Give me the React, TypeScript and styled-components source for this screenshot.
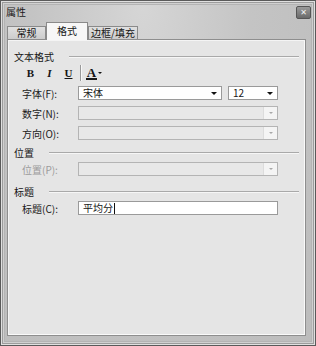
import React from "react";
import styled, { createGlobalStyle, css } from "styled-components";

const Global = createGlobalStyle`
  html, body { margin: 0; padding: 0; background: #bdbdbd; }
  body { font-family: "Noto Sans CJK SC", "Noto Sans", sans-serif; }
  * { box-sizing: border-box; }
`;

const Window = styled.div`
  width: 316px;
  height: 346px;
  border: 1px solid #5a5a5a;
  background: radial-gradient(ellipse at 45% 0%, #d6d6d6 0%, #c4c4c4 45%, #bcbcbc 100%);
  box-shadow: inset 0 0 0 1px #e0e0e0, inset 0 0 0 2px #9c9c9c, inset 0 0 0 3px #d0d0d0,
    inset 0 0 0 4px #b4b4b4;
  display: flex;
  flex-direction: column;
  color: #151515;
  font-size: 10px;
`;

const TitleBar = styled.div`
  height: 21px;
  display: flex;
  align-items: center;
  justify-content: space-between;
  padding: 0 4px 0 5px;
  font-size: 10px;
  color: #1a1a1a;
`;

const CloseButton = styled.div`
  width: 15px;
  height: 13px;
  margin-top: 2px;
  border: 1px solid #555;
  border-radius: 2px;
  background: linear-gradient(#9a9a9a, #6a6a6a);
  display: flex;
  align-items: center;
  justify-content: center;
  color: #f2f2f2;
  font-family: "DejaVu Sans", sans-serif;
  font-size: 8px;
  font-weight: bold;
  line-height: 1;
`;

const Body = styled.div`
  flex: 1;
  display: flex;
  flex-direction: column;
  padding: 0 9px 9px 6px;
`;

const TabStrip = styled.div`
  height: 17px;
  display: flex;
  align-items: flex-end;
  position: relative;
  z-index: 1;
`;

const Tab = styled.div<{ $w: number; $active?: boolean }>`
  width: ${(p) => p.$w}px;
  height: 13px;
  border: 1px solid #8a8a8a;
  border-bottom: none;
  background: linear-gradient(#e0e0e0, #cccccc);
  display: flex;
  align-items: center;
  justify-content: center;
  font-size: 10px;
  line-height: 1;
  ${(p) =>
    p.$active &&
    css`
      height: 18px;
      margin-bottom: -1px;
      background: #f7f7f7;
      align-items: flex-start;
      padding-top: 3px;
    `}
`;

const Panel = styled.div`
  flex: 1;
  border: 1px solid #8e8e8e;
  background: #e5e5e5;
  box-shadow: inset 1px 1px 0 #f4f4f4, inset -1px -1px 0 #fafafa;
  display: flex;
  flex-direction: column;
`;

const SectionHeader = styled.div<{ $mt: number }>`
  height: 14px;
  margin-top: ${(p) => p.$mt}px;
  padding: 0 6px;
  display: flex;
  align-items: center;
  font-size: 10px;
  &::after {
    content: "";
    flex: 1;
    height: 1px;
    margin-left: 15px;
    background: #a9a9a9;
    box-shadow: 0 1px 0 #f6f6f6;
  }
`;

const Toolbar = styled.div`
  height: 18px;
  margin-top: 1px;
  padding-left: 13px;
  display: flex;
  align-items: center;
`;

const ToolButton = styled.div<{ $italic?: boolean; $underline?: boolean }>`
  width: 19px;
  height: 16px;
  display: flex;
  align-items: center;
  justify-content: center;
  font-family: "Liberation Serif", serif;
  font-weight: bold;
  font-size: 11px;
  font-style: ${(p) => (p.$italic ? "italic" : "normal")};
  text-decoration: ${(p) => (p.$underline ? "underline" : "none")};
`;

const ToolSep = styled.div`
  width: 1px;
  height: 16px;
  margin: 0 5px 0 2px;
  background: #9a9a9a;
  box-shadow: 1px 0 0 #f8f8f8;
`;

const ColorButton = styled.div`
  height: 16px;
  display: flex;
  align-items: center;
  gap: 1px;
`;

const ColorLetter = styled.div`
  display: flex;
  flex-direction: column;
  align-items: center;
  font-family: "Liberation Serif", serif;
  font-weight: bold;
  font-size: 13px;
  line-height: 11px;
  &::after {
    content: "";
    width: 11px;
    height: 2px;
    background: #1a1a1a;
  }
`;

const Caret = styled.span<{ $color?: string; $size?: number }>`
  width: 0;
  height: 0;
  border-left: ${(p) => p.$size ?? 3}px solid transparent;
  border-right: ${(p) => p.$size ?? 3}px solid transparent;
  border-top: ${(p) => p.$size ?? 3}px solid ${(p) => p.$color ?? "#111"};
`;

const Row = styled.div<{ $mt: number }>`
  height: 14px;
  margin-top: ${(p) => p.$mt}px;
  padding-left: 14px;
  display: flex;
  align-items: center;
`;

const Label = styled.div<{ $disabled?: boolean }>`
  width: 56px;
  font-size: 10px;
  color: ${(p) => (p.$disabled ? "#9c9c9c" : "#1a1a1a")};
  white-space: nowrap;
`;

const Combo = styled.div<{ $w: number; $disabled?: boolean; $ml?: number }>`
  width: ${(p) => p.$w}px;
  height: 14px;
  margin-left: ${(p) => p.$ml ?? 0}px;
  border: 1px solid ${(p) => (p.$disabled ? "#b4b4b4" : "#9a9a9a")};
  background: ${(p) => (p.$disabled ? "#e8e8e8" : "#ffffff")};
  display: flex;
  align-items: center;
  font-size: 10px;
`;

const ComboText = styled.div`
  flex: 1;
  padding-left: 4px;
  line-height: 1;
  white-space: nowrap;
`;

const ComboArrow = styled.div<{ $disabled?: boolean }>`
  width: 14px;
  height: 100%;
  display: flex;
  align-items: center;
  justify-content: center;
  ${(p) =>
    p.$disabled &&
    css`
      background: #f4f4f4;
      border-left: 1px solid #dcdcdc;
    `}
`;

const TextInput = styled.div`
  width: 200px;
  height: 14px;
  border: 1px solid #9a9a9a;
  background: #fff;
  display: flex;
  align-items: center;
  padding-left: 4px;
  font-size: 10px;
  line-height: 1;
`;

const Cursor = styled.span`
  display: inline-block;
  width: 1px;
  height: 11px;
  margin-left: 1px;
  background: #111;
`;

function ComboBox(props: { w: number; text?: string; disabled?: boolean; ml?: number }) {
  return (
    <Combo $w={props.w} $disabled={props.disabled} $ml={props.ml}>
      <ComboText>{props.text}</ComboText>
      <ComboArrow $disabled={props.disabled}>
        <Caret $color={props.disabled ? "#a8a8a8" : "#111"} $size={props.disabled ? 2.5 : 3} />
      </ComboArrow>
    </Combo>
  );
}

export default function App() {
  return (
    <>
      <Global />
      <Window>
        <TitleBar>
          <span>属性</span>
          <CloseButton>✕</CloseButton>
        </TitleBar>
        <Body>
          <TabStrip>
            <Tab $w={39}>常规</Tab>
            <Tab $w={42} $active>格式</Tab>
            <Tab $w={50}>边框/填充</Tab>
          </TabStrip>
          <Panel>
            <SectionHeader $mt={9}>文本格式</SectionHeader>
            <Toolbar>
              <ToolButton>B</ToolButton>
              <ToolButton $italic>I</ToolButton>
              <ToolButton $underline>U</ToolButton>
              <ToolSep />
              <ColorButton>
                <ColorLetter>A</ColorLetter>
                <Caret $size={2} />
              </ColorButton>
            </Toolbar>
            <Row $mt={4}>
              <Label>字体(F):</Label>
              <ComboBox w={144} text="宋体" />
              <ComboBox w={50} text="12" ml={6} />
            </Row>
            <Row $mt={6}>
              <Label>数字(N):</Label>
              <ComboBox w={200} disabled />
            </Row>
            <Row $mt={6}>
              <Label>方向(O):</Label>
              <ComboBox w={200} disabled />
            </Row>
            <SectionHeader $mt={5}>位置</SectionHeader>
            <Row $mt={3}>
              <Label $disabled>位置(P):</Label>
              <ComboBox w={200} disabled />
            </Row>
            <SectionHeader $mt={8}>标题</SectionHeader>
            <Row $mt={3}>
              <Label>标题(C):</Label>
              <TextInput>
                平均分
                <Cursor />
              </TextInput>
            </Row>
          </Panel>
        </Body>
      </Window>
    </>
  );
}
